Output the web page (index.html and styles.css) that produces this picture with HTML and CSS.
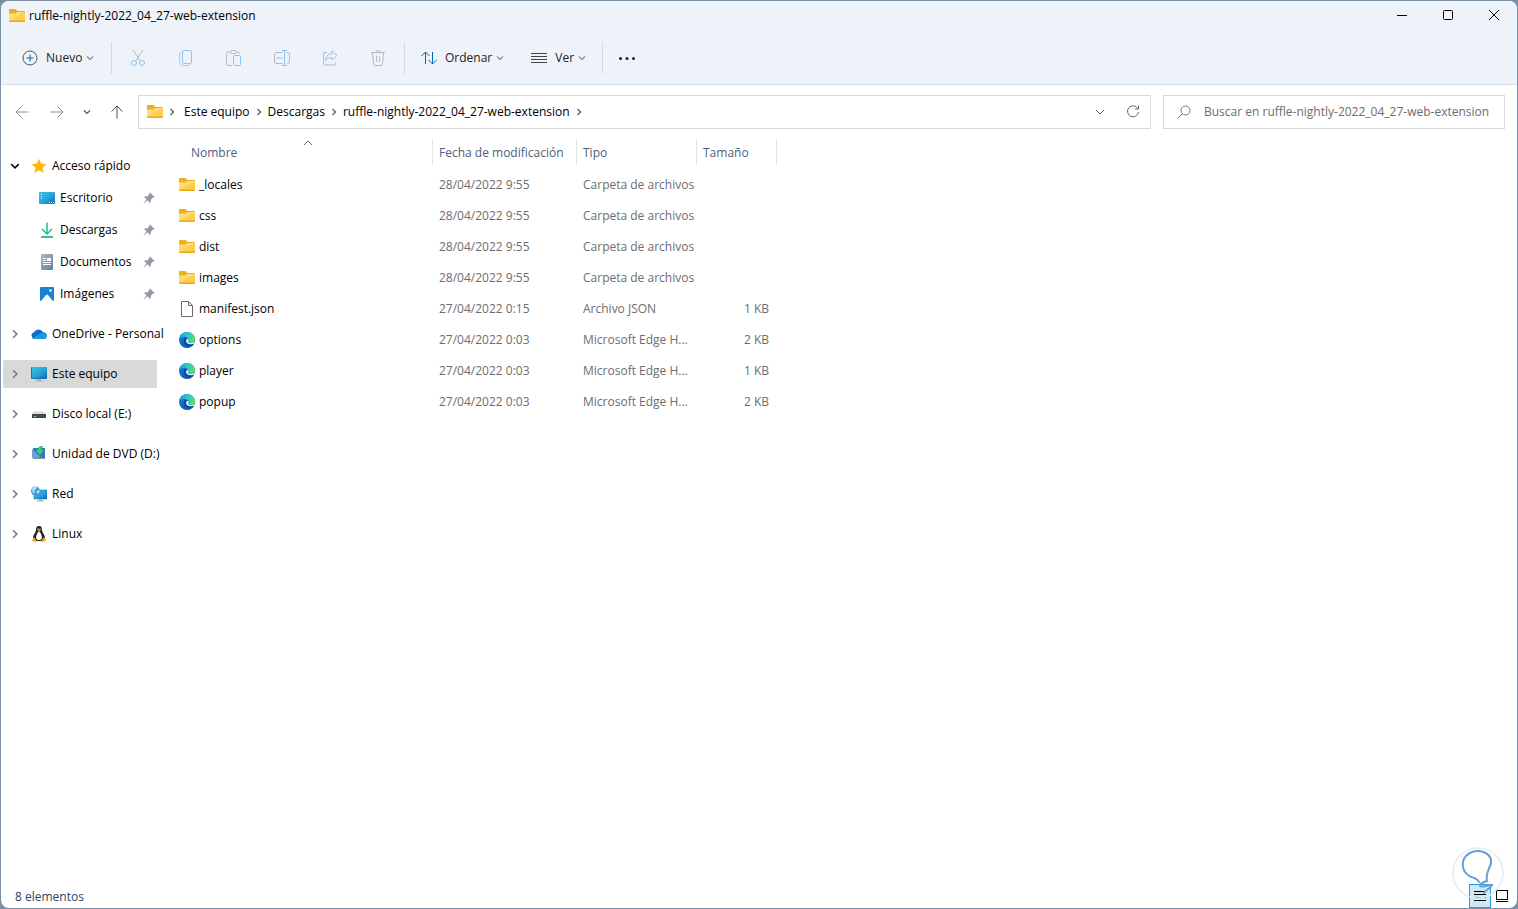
FILE: index.html
```html
<!DOCTYPE html>
<html lang="es">
<head>
  <meta charset="UTF-8">
  <meta name="viewport" content="width=device-width, initial-scale=1.0">
  <title>ruffle-nightly-2022_04_27-web-extension</title>
  <link rel="stylesheet" href="styles.css">
</head>
<body>
  <!-- Shared icons -->
  <svg class="defs" aria-hidden="true">
    <defs>
      <linearGradient id="g-folder" x1="0" y1="0" x2="1" y2="1">
        <stop offset="0" stop-color="#ffe08a"/><stop offset=".5" stop-color="#ffd873"/><stop offset=".52" stop-color="#ffcf55"/><stop offset="1" stop-color="#fcc93f"/>
      </linearGradient>
      <linearGradient id="g-screen" x1="0" y1="0" x2="1" y2="1">
        <stop offset="0" stop-color="#35c1e0"/><stop offset=".55" stop-color="#27a3d5"/><stop offset="1" stop-color="#0b68bd"/>
      </linearGradient>
      <linearGradient id="g-doc" x1="0" y1="0" x2="1" y2="1">
        <stop offset="0" stop-color="#a9b8cc"/><stop offset="1" stop-color="#6b7f9c"/>
      </linearGradient>
      <linearGradient id="g-edge-top" x1="0" y1="0" x2="1" y2="0">
        <stop offset="0" stop-color="#1d9fdc"/><stop offset=".5" stop-color="#2fc2d8"/><stop offset="1" stop-color="#63e04f"/>
      </linearGradient>
      <linearGradient id="g-edge-low" x1="0" y1="0" x2="1" y2="1">
        <stop offset="0" stop-color="#1488dc"/><stop offset=".6" stop-color="#0b62b8"/><stop offset="1" stop-color="#0a3f85"/>
      </linearGradient>
    </defs>
    <symbol id="folder" viewBox="0 0 16 16">
      <path d="M0 2Q0 1 1 1H6q1 0 1.500.7L8.500 3H15q1 0 1 1v9H0z" fill="#eeb01c"/>
      <path d="M0 5.500h6.500L8 4h8v9H0z" fill="url(#g-folder)"/>
      <path d="M0 12.500h16v.5q0 1-1 1H1q-1 0-1-1z" fill="#e9a912"/>
    </symbol>
    <symbol id="file" viewBox="0 0 16 16">
      <path d="M2.500.5h7l4 4v11h-11zM9.500.5v4h4" fill="#fff" stroke="#6b6b6b"/>
    </symbol>
    <symbol id="edge" viewBox="0 0 16 16">
      <circle cx="8" cy="8" r="8" fill="url(#g-edge-low)"/>
      <path d="M.1 7C.7 3 4 0 8 0c4.800 0 8 3.500 8 7.200 0 2.700-2 4-4.200 4-1.800 0-3-.8-3-1.500 0-.5.7-.8.7-1.900C9.500 6 7.500 4.700 5.500 4.700 3 4.700.8 5.800.1 7z" fill="url(#g-edge-top)"/>
      <path d="M5.500 5.800C4 8.500 5 12.500 9 14c2.500.8 4.700-.3 5.800-2-1.800.9-4.600 1-6.300-.4-1.700-1.300-1.700-3.300-.7-4.100-.5-1-1.300-1.500-2.300-1.700z" fill="#0b4a94"/>
      <path d="M8.200 7c-1.500 1-1.500 3 .1 4.200 1.800 1.400 4.900 1.300 7 0 .4-.7.5-1.200.5-1.700-1.100 1.300-2.700 1.700-4 1.700-1.800 0-3-.8-3-1.500 0-.5.7-.8.7-1.900 0-.4-.4-.8-1.300-.8z" fill="#fff"/>
    </symbol>
    <symbol id="chev-down" viewBox="0 0 8 8"><path d="M1 2.500l3 3 3-3" fill="none" stroke="currentColor" stroke-width="1.200"/></symbol>
    <symbol id="chev-right" viewBox="0 0 8 8"><path d="M2.500 1l3 3-3 3" fill="none" stroke="currentColor" stroke-width="1.200"/></symbol>
    <symbol id="pin" viewBox="0 0 12 12">
      <path d="M7 .5L11.500 5l-.8.8-1-.1-2 2 .1 2.300-.9.800L4.400 8.300 1 11.300l-.5-.4L3.500 7.500 1.200 5.100 2 4.300l2.300.1 2-2-.2-1z" fill="#8d98a3"/>
    </symbol>
  </svg>

  <div class="window">
    <header class="top">
      <div class="titlebar">
        <svg class="icon"><use href="#folder"/></svg>
        <h1>ruffle-nightly-2022_04_27-web-extension</h1>
        <div class="controls">
          <button aria-label="Minimizar"><svg width="12" height="12"><path d="M1 5.500h10" stroke="#000"/></svg></button>
          <button aria-label="Maximizar"><svg width="12" height="12"><rect x="1.500" y=".5" width="9" height="9" rx="1" fill="none" stroke="#000"/></svg></button>
          <button aria-label="Cerrar"><svg width="12" height="12"><path d="M1 0l10 10M11 0L1 10" stroke="#000"/></svg></button>
        </div>
      </div>

      <div class="toolbar">
        <div class="group new">
          <button>
            <svg class="icon" viewBox="0 0 16 16" fill="none"><circle cx="8" cy="8" r="7" stroke="#555"/><path d="M8 4.500v7M4.500 8h7" stroke="#0067b8"/></svg>
            <span>Nuevo</span>
            <svg class="chev"><use href="#chev-down"/></svg>
          </button>
        </div>
        <div class="group edit">
          <button aria-label="Cortar"><svg class="icon" viewBox="0 0 16 16" fill="none"><path d="M3 0l7.300 11M13 0L5.700 11" stroke="#b5babf"/><circle cx="4" cy="13" r="2.500" stroke="#8cc4f5"/><circle cx="12" cy="13" r="2.500" stroke="#8cc4f5"/></svg></button>
          <button aria-label="Copiar"><svg class="icon" viewBox="0 0 16 16" fill="none"><path d="M3.500 2Q1.500 2.500 1.500 4v8q0 3.500 3.500 3.500h5q1.500 0 2-1.500" stroke="#b9c6d3"/><rect x="4.500" y=".5" width="9" height="13" rx="1.500" stroke="#8cc4f5"/></svg></button>
          <button aria-label="Pegar"><svg class="icon" viewBox="0 0 16 16" fill="none"><path d="M4.500 2H2Q.5 2 .5 3.500v10Q.5 15.500 2 15.500h4M10.500 2H12q1.500 0 1.500 2" stroke="#b5babf"/><rect x="4.500" y=".5" width="6" height="3" rx="1.500" stroke="#b5babf"/><rect x="7.500" y="5.500" width="7" height="10" rx="1" stroke="#8cc4f5"/></svg></button>
          <button aria-label="Cambiar nombre"><svg class="icon" viewBox="0 0 16 16" fill="none"><path d="M8.500 2.500H2Q.5 2.500.5 4v8q0 1.500 1.500 1.500h6.500M13 2.500h1q1.500 0 1.500 1.500v8q0 1.500-1.500 1.500h-1" stroke="#b5babf"/><path d="M8 .5h5M8 15.500h5M10.500.5v15M2.500 8h6" stroke="#8cc4f5"/></svg></button>
          <button aria-label="Compartir"><svg class="icon" viewBox="0 0 16 16" fill="none"><path d="M5 2.500H3Q1.500 2.500 1.500 4v9.500Q1.500 15 3 15h9q1.500 0 1.500-1.500V12" stroke="#b5babf"/><path d="M10 1l5 4.500-5 4.500V7.500Q6 7.300 3.500 10.500 4 4 10 3.700z" stroke="#8cc4f5" stroke-linejoin="round"/></svg></button>
          <button aria-label="Eliminar"><svg class="icon" viewBox="0 0 16 16" fill="none" stroke="#b5babf"><path d="M1 2.500h14M2.500 2.500l1 11.500q.2 1.500 1.500 1.500h6q1.300 0 1.500-1.500l1-11.500M6 2.500Q6 .5 8 .5t2 2M6.500 6v6M9.500 6v6"/></svg></button>
        </div>
        <div class="group view">
          <button>
            <svg class="icon" viewBox="0 0 16 16" fill="none"><path d="M4.500 14V2M.5 6l4-4 4 4" stroke="#555"/><path d="M11.500 2v12M7.500 10l4 4 4-4" stroke="#0067b8"/></svg>
            <span>Ordenar</span>
            <svg class="chev"><use href="#chev-down"/></svg>
          </button>
          <button>
            <svg class="icon" viewBox="0 0 16 16"><path d="M0 3.500h16M0 6.500h16M0 9.500h16M0 12.500h16" stroke="#444"/></svg>
            <span>Ver</span>
            <svg class="chev"><use href="#chev-down"/></svg>
          </button>
        </div>
        <div class="group more">
          <button aria-label="Ver más"><svg class="icon" viewBox="0 0 16 16" fill="#222"><circle cx="1.500" cy="8.500" r="1.500"/><circle cx="8" cy="8.500" r="1.500"/><circle cx="14.500" cy="8.500" r="1.500"/></svg></button>
        </div>
      </div>
    </header>

    <div class="address">
      <div class="history">
        <button aria-label="Atrás"><svg width="14" height="14" fill="none" stroke="#8e8e8e"><path d="M13.500 7H1M6.500 1.500L1 7l5.500 5.500"/></svg></button>
        <button aria-label="Adelante"><svg width="14" height="14" fill="none" stroke="#8e8e8e"><path d="M.5 7H13M7.500 1.500L13 7l-5.500 5.500"/></svg></button>
        <button aria-label="Recientes" class="recent"><svg class="chev"><use href="#chev-down"/></svg></button>
        <button aria-label="Subir"><svg width="14" height="14" fill="none" stroke="#555"><path d="M7 13.500V1M1.500 6.500L7 1l5.500 5.500"/></svg></button>
      </div>
      <nav class="path" aria-label="Ruta">
        <svg class="icon"><use href="#folder"/></svg>
        <svg class="chev"><use href="#chev-right"/></svg>
        <a href="#">Este equipo</a>
        <svg class="chev"><use href="#chev-right"/></svg>
        <a href="#">Descargas</a>
        <svg class="chev"><use href="#chev-right"/></svg>
        <a href="#">ruffle-nightly-2022_04_27-web-extension</a>
        <svg class="chev"><use href="#chev-right"/></svg>
        <div class="path-actions">
          <button aria-label="Ubicaciones anteriores"><svg width="10" height="10" fill="none" stroke="#666"><path d="M1 3l4 4 4-4"/></svg></button>
          <button aria-label="Actualizar"><svg width="14" height="14" fill="none" stroke="#666"><path d="M11.800 3.500A5.500 5.500 0 1 0 12.500 7M12.500.5v3.500H9"/></svg></button>
        </div>
      </nav>
      <label class="search">
        <svg width="14" height="14" fill="none" stroke="#777"><circle cx="8.500" cy="5.500" r="4.500"/><path d="M5.300 8.700L.8 13.200"/></svg>
        <input type="text" aria-label="Buscar" placeholder="Buscar en ruffle-nightly-2022_04_27-web-extension">
      </label>
    </div>

    <div class="content">
      <nav class="sidebar" aria-label="Panel de navegación">
        <div class="quick">
          <button class="node open">
            <svg class="arrow"><use href="#chev-down"/></svg>
            <svg class="icon" viewBox="0 0 16 16"><path d="M8 .8l2.200 4.800 5.200.6-3.900 3.500 1.100 5.200L8 12.300l-4.600 2.600 1.100-5.200L.6 6.200l5.200-.6z" fill="#fdb90b"/></svg>
            <span>Acceso rápido</span>
          </button>
          <button class="node child">
            <svg class="icon" viewBox="0 0 16 16"><rect y="2" width="16" height="12" rx="1" fill="url(#g-screen)"/><path d="M2 4h1v1H2zM2 6h1v1H2zM2 8h1v1H2zM10 12h1v1h-1zM12 12h1v1h-1zM14 12h1v1h-1z" fill="#e8fbff"/></svg>
            <span>Escritorio</span>
            <svg class="pin"><use href="#pin"/></svg>
          </button>
          <button class="node child">
            <svg class="icon" viewBox="0 0 16 16" fill="none" stroke-width="1.500"><path d="M8 .5v11M3 7l5 5 5-5" stroke="#20bf8a"/><path d="M2 15h12" stroke="#0c9b76"/></svg>
            <span>Descargas</span>
            <svg class="pin"><use href="#pin"/></svg>
          </button>
          <button class="node child">
            <svg class="icon" viewBox="0 0 16 16"><rect x="2" width="12" height="16" rx="1" fill="url(#g-doc)"/><path d="M4 4.500h3M4 6.500h3M4 8.500h8M4 10.500h8" stroke="#fff"/><path d="M8 4h4v3H8z" fill="#fff"/></svg>
            <span>Documentos</span>
            <svg class="pin"><use href="#pin"/></svg>
          </button>
          <button class="node child">
            <svg class="icon" viewBox="0 0 16 16"><rect x="1" y="1" width="14" height="14" rx="1" fill="#1583cf"/><path d="M2 15l5.300-6.200q.7-.7 1.400 0L14 15z" fill="#fff"/><circle cx="11.500" cy="4.500" r="1.200" fill="#fff"/></svg>
            <span>Imágenes</span>
            <svg class="pin"><use href="#pin"/></svg>
          </button>
        </div>
        <button class="node">
          <svg class="arrow"><use href="#chev-right"/></svg>
          <svg class="icon" viewBox="0 0 16 16"><path d="M3.500 13A3.500 3.500 0 0 1 3 6.200 5 5 0 0 1 12 6.300 3.400 3.400 0 0 1 12.700 13z" fill="#0a6fc8"/><path d="M1.500 12.200L9 7.500q1.500-1 3-1 4 .2 4 3.500 0 3-3.300 3H3.500q-1.300 0-2-.8z" fill="#2196dc"/></svg>
          <span>OneDrive - Personal</span>
        </button>
        <button class="node selected">
          <svg class="arrow"><use href="#chev-right"/></svg>
          <svg class="icon" viewBox="0 0 16 16"><rect y="1" width="16" height="12" rx="1" fill="#1573bd"/><rect x="1" y="1" width="15" height="11" fill="url(#g-screen)"/><path d="M6 13h4v1.500H6zM4 14.500h8v1H4z" fill="#a5b3bf"/></svg>
          <span>Este equipo</span>
        </button>
        <button class="node">
          <svg class="arrow"><use href="#chev-right"/></svg>
          <svg class="icon" viewBox="0 0 16 16"><path d="M3 5.500h10l2 3H1z" fill="#d5d9dc"/><path d="M1 8h14v4H1z" fill="#45494c"/><path d="M3 10h2v1H3z" fill="#65e66a"/></svg>
          <span>Disco local (E:)</span>
        </button>
        <button class="node">
          <svg class="arrow"><use href="#chev-right"/></svg>
          <svg class="icon" viewBox="0 0 16 16"><path d="M2 2h12v10H2z" fill="#3a78bd"/><path d="M1 3l9 8.500-9 .5z" fill="#68a5dc"/><path d="M2 12h12v1H2z" fill="#8697a8"/><path d="M12 0Q7 0 7 4L4.500 4 9 9l4-5h-2.500q-.3-2 1.500-4z" fill="#3fd07c" stroke="#229c55" stroke-width=".5"/></svg>
          <span>Unidad de DVD (D:)</span>
        </button>
        <button class="node">
          <svg class="arrow"><use href="#chev-right"/></svg>
          <svg class="icon" viewBox="0 0 16 16"><rect x="3" y="4" width="13" height="9" fill="url(#g-screen)" stroke="#0d6db4" stroke-width=".5"/><path d="M8 13h3v2H8zM6 14.500h7v1H6z" fill="#a5b3bf"/><circle cx="4.500" cy="5" r="4.500" fill="#4a9ad0"/><path d="M1 3q3-3 5-2L5 3 3 4l1 2-2 1zM6 5l2.500-1v2L6 8z" fill="#c4e3f4"/></svg>
          <span>Red</span>
        </button>
        <button class="node">
          <svg class="arrow"><use href="#chev-right"/></svg>
          <svg class="icon" viewBox="0 0 16 16"><path d="M8 0c2.200 0 3 1.500 3 4 0 2.500 3 4.500 3 8.500L11 15H5l-3-2.500C2 8.500 5 6.500 5 4c0-2.500.8-4 3-4z" fill="#222"/><path d="M8 5.500c1.700 1 3 4 3 6.500L9.500 14h-3L5 12c0-2.500 1.300-5.500 3-6.500z" fill="#fff"/><circle cx="7" cy="3.300" r=".7" fill="#fff"/><circle cx="9" cy="3.300" r=".7" fill="#fff"/><path d="M6.500 4.700L8 4l1.500.7L8 6zM3 11l3 4-1.500 1-3.500-1.200zM13 11l-3 4 1.500 1 3.500-1.500z" fill="#f0a020"/></svg>
          <span>Linux</span>
        </button>
      </nav>

      <main class="files">
        <table>
          <thead>
            <tr>
              <th class="name">Nombre<svg class="sort" width="10" height="6" fill="none" stroke="#666"><path d="M1 5l4-4 4 4"/></svg></th>
              <th class="date">Fecha de modificación</th>
              <th class="type">Tipo</th>
              <th class="size">Tamaño</th>
            </tr>
          </thead>
          <tbody>
            <tr><td><div class="file"><svg class="icon"><use href="#folder"/></svg>_locales</div></td><td>28/04/2022 9:55</td><td>Carpeta de archivos</td><td></td></tr>
            <tr><td><div class="file"><svg class="icon"><use href="#folder"/></svg>css</div></td><td>28/04/2022 9:55</td><td>Carpeta de archivos</td><td></td></tr>
            <tr><td><div class="file"><svg class="icon"><use href="#folder"/></svg>dist</div></td><td>28/04/2022 9:55</td><td>Carpeta de archivos</td><td></td></tr>
            <tr><td><div class="file"><svg class="icon"><use href="#folder"/></svg>images</div></td><td>28/04/2022 9:55</td><td>Carpeta de archivos</td><td></td></tr>
            <tr><td><div class="file"><svg class="icon"><use href="#file"/></svg>manifest.json</div></td><td>27/04/2022 0:15</td><td>Archivo JSON</td><td>1 KB</td></tr>
            <tr><td><div class="file"><svg class="icon"><use href="#edge"/></svg>options</div></td><td>27/04/2022 0:03</td><td>Microsoft Edge H...</td><td>2 KB</td></tr>
            <tr><td><div class="file"><svg class="icon"><use href="#edge"/></svg>player</div></td><td>27/04/2022 0:03</td><td>Microsoft Edge H...</td><td>1 KB</td></tr>
            <tr><td><div class="file"><svg class="icon"><use href="#edge"/></svg>popup</div></td><td>27/04/2022 0:03</td><td>Microsoft Edge H...</td><td>2 KB</td></tr>
          </tbody>
        </table>
      </main>
    </div>

    <footer class="status">
      <span>8 elementos</span>
      <div class="modes">
        <button class="active" aria-label="Detalles"><svg width="12" height="12"><path d="M0 1.500h12M0 4.500h12M0 7.500h12M0 10.500h12" stroke="#000"/></svg></button>
        <button aria-label="Iconos grandes"><svg width="12" height="12"><rect x=".5" y=".5" width="11" height="9" fill="none" stroke="#000"/><path d="M0 11.500h12" stroke="#000"/></svg></button>
      </div>
    </footer>

    <svg class="badge" viewBox="0 0 54 54" fill="none" aria-hidden="true">
      <circle cx="27" cy="27" r="25" stroke="#e3eaf2" stroke-width="1.500"/>
      <path d="M28 36c-2-5-6-3-11-7-8-6-7-19 4-23 10-3 20 2 19 11-1 6-6 10-4 18-3 1-8 3-7 5 3 2 9-2 12-1-2 4-7 5-8 8" stroke="#6c9bd2" stroke-width="2" stroke-linecap="round"/>
    </svg>
  </div>
</body>
</html>
```
FILE: styles.css
```css
:root {
  --chrome: #eef3fa;
  --line: #d9d9d9;
  --text: #000000;
  --muted: #6d6d6d;
  --heading: #4c607a;
}
* { box-sizing: border-box; margin: 0; padding: 0; }
body {
  height: 100vh;
  padding: 1px;
  font-family: 'Open Sans', 'Noto Sans', sans-serif;
  font-size: 12px;
  line-height: 16px;
  color: var(--text);
  background: #7d8fa3;
}
button {
  border: none;
  background: none;
  font: inherit;
  color: inherit;
  display: flex;
  align-items: center;
}
a { color: inherit; text-decoration: none; }
svg { flex: none; display: block; }
.defs { position: absolute; width: 0; height: 0; }
.icon { width: 16px; height: 16px; }
.chev { width: 8px; height: 8px; color: #555; }

.window {
  position: relative;
  height: 100%;
  display: flex;
  flex-direction: column;
  background: #fff;
  border-radius: 8px;
  overflow: hidden;
}

/* Title bar and commands */
.top {
  background: var(--chrome);
  border-bottom: 1px solid #d8dfe6;
}
.titlebar {
  display: flex;
  align-items: center;
  gap: 4px;
  height: 29px;
  padding-left: 8px;
}
.titlebar h1 {
  font-size: 12px;
  font-weight: normal;
}
.controls { display: flex; margin-left: auto; }
.controls button {
  width: 46px;
  height: 29px;
  justify-content: center;
}
.toolbar {
  display: flex;
  align-items: center;
  height: 54px;
  padding-top: 2px;
  color: #222;
}
.group {
  display: flex;
  align-items: center;
  height: 32px;
}
.group + .group { border-left: 1px solid #d5dae0; }
.group button { gap: 8px; }
.group .chev { margin-left: -4px; color: #888; }
.new { width: 110px; padding-left: 21px; }
.edit { padding: 0 2px; }
.edit button {
  width: 48px;
  height: 32px;
  justify-content: center;
}
.view { width: 198px; padding-left: 16px; gap: 27px; }
.more { padding-left: 16px; }

/* Address row */
.address {
  display: flex;
  align-items: center;
  gap: 12px;
  height: 54px;
  padding: 0 12px 0 14px;
}
.history { display: flex; align-items: center; gap: 21px; width: 111px; }
.history .recent { width: 8px; margin: 0 -2px; }
.path, .search {
  display: flex;
  align-items: center;
  height: 34px;
  border: 1px solid var(--line);
}
.path { flex: 1; padding-left: 8px; gap: 5px; }
.path > .icon + .chev { margin-right: 3px; }
.path-actions { display: flex; gap: 21px; margin-left: auto; padding-right: 10px; }
.search { width: 342px; padding-left: 13px; gap: 13px; }
.search input {
  flex: 1;
  min-width: 0;
  border: none;
  outline: none;
  font: inherit;
  background: none;
}
.search input::placeholder { color: var(--muted); opacity: 1; }

/* Navigation pane */
.content { display: flex; flex: 1; min-height: 0; }
.sidebar {
  display: flex;
  flex-direction: column;
  gap: 12px;
  width: 164px;
  padding: 13px 8px 0 2px;
}
.quick { display: flex; flex-direction: column; gap: 4px; }
.node {
  width: 100%;
  height: 28px;
  padding-left: 7px;
  gap: 5px;
  border-radius: 2px;
  white-space: nowrap;
}
.node .arrow { width: 10px; height: 10px; margin-right: 6px; color: #777; }
.node.open .arrow { color: #000; }
.node.child { padding: 0 2px 0 36px; }
.node .pin { width: 12px; height: 12px; margin-left: auto; }
.node.selected { background: #d9d9d9; }

/* File list */
.files { flex: 1; }
table {
  width: 612px;
  table-layout: fixed;
  border-collapse: separate;
  border-spacing: 0;
}
th {
  position: relative;
  height: 26px;
  padding: 2px 0 0 6px;
  border-right: 1px solid #e5e5e5;
  text-align: left;
  font-weight: normal;
  color: var(--heading);
}
th.name { width: 268px; padding-left: 26px; }
th.date { width: 144px; }
th.type { width: 120px; }
th.size { width: 80px; }
.sort { position: absolute; top: 1px; left: 138px; }
thead::after { content: ""; display: block; height: 4px; }
td {
  height: 31px;
  padding-left: 6px;
  color: var(--muted);
}
td:first-child { padding-left: 14px; color: var(--text); }
td:last-child { padding-right: 8px; text-align: right; }
.file { display: flex; align-items: center; gap: 4px; }

/* Status bar */
.status {
  display: flex;
  align-items: center;
  justify-content: space-between;
  height: 24px;
  padding: 0 4px 0 14px;
  color: #2c4566;
}
.status span { padding-top: 2px; }
.modes { display: flex; }
.modes button {
  width: 22px;
  height: 24px;
  justify-content: center;
}
.modes .active {
  background: #cde8f8;
  border: 1px solid #26a0da;
}
.badge {
  position: absolute;
  right: 12px;
  bottom: 8px;
  width: 54px;
  height: 54px;
}
```
